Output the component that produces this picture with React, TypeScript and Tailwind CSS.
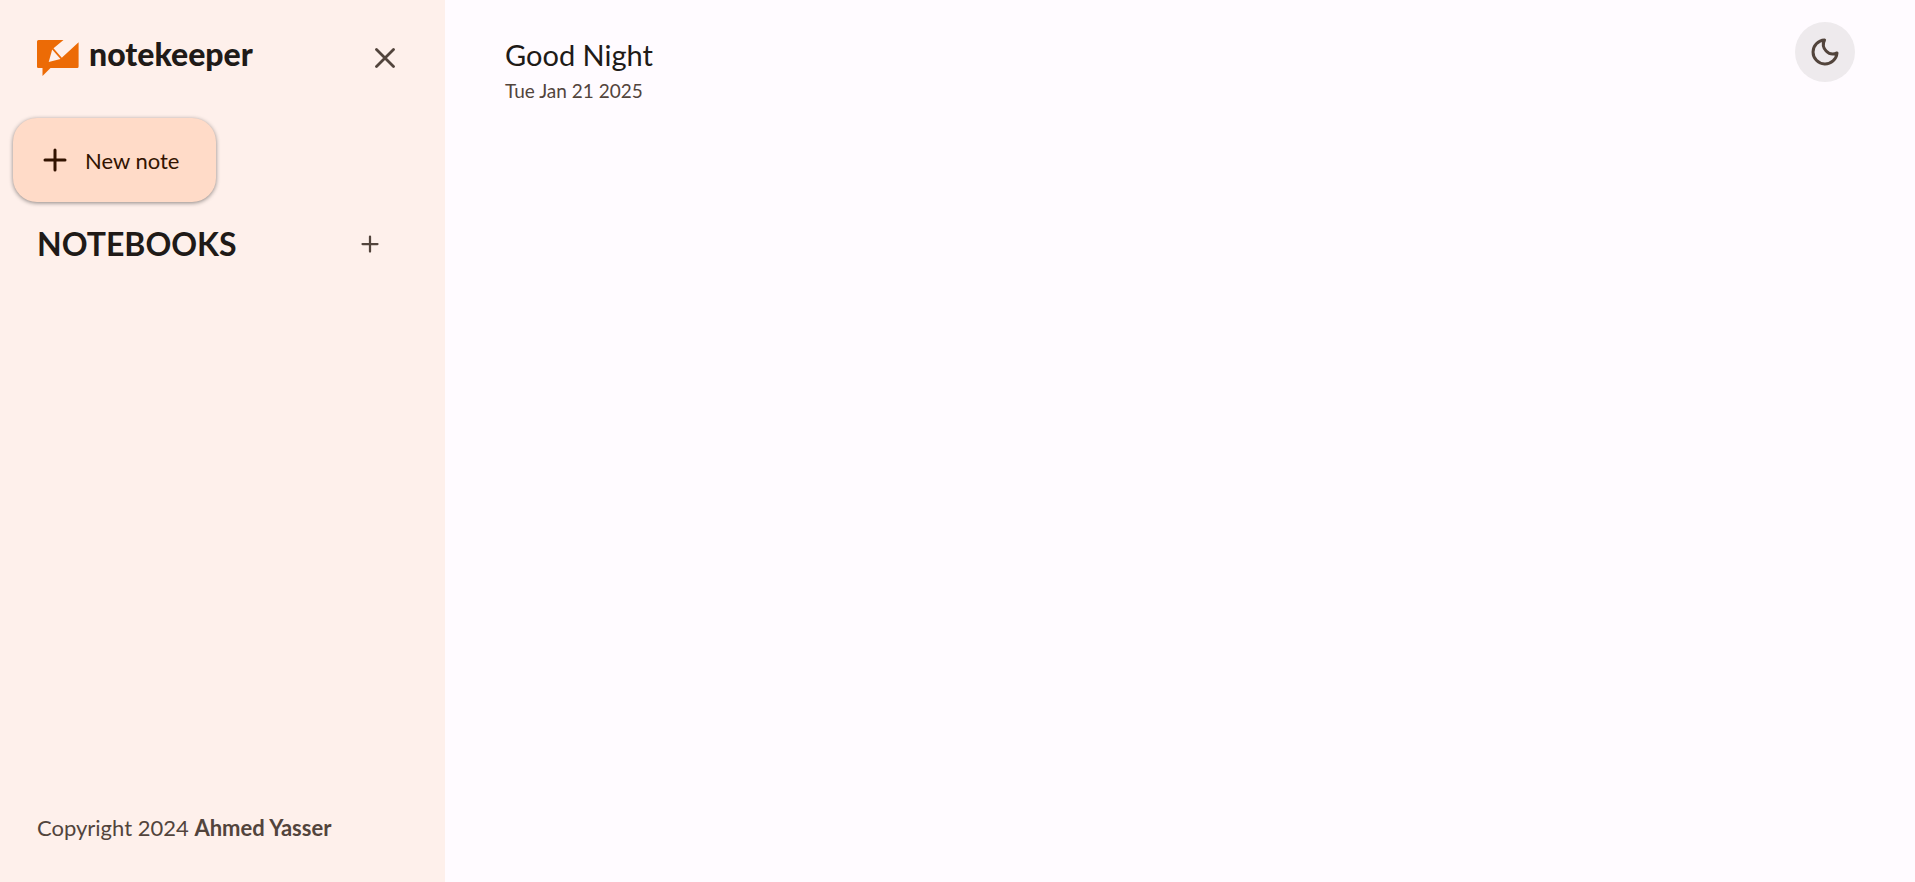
function Logo() {
  return (
    <a href="#" aria-label="notekeeper" className="flex items-start gap-2.5">
      <svg width="42" height="36" viewBox="0 0 42 36" aria-hidden="true">
        <path
          fill="#ec6b06"
          d="M1.500 0H26.500L16.500 8.200L24.800 17.800L41.600 2.300V26.500Q41.600 28 40.200 28H13.500L5.500 36V28H1.300Q0 28 0 26.700V1.500Q0 0 1.500 0Z"
        />
        <path fill="#fef0eb" d="M15.200 9.500L23.500 19L11.700 22Z" />
      </svg>
      <span className="-mt-1 font-[Lato,sans-serif] text-[32px] leading-9 font-black">notekeeper</span>
    </a>
  );
}

function Plus({ size, stroke }: { size: number; stroke: number }) {
  return (
    <svg width={size} height={size} viewBox="0 0 24 24" fill="none" stroke="currentColor" strokeWidth={stroke} strokeLinecap="round" aria-hidden="true">
      <path d="M12 2V22M2 12H22" />
    </svg>
  );
}

export default function App() {
  return (
    <div className="flex min-h-screen bg-[#fffbff] font-[Lato,sans-serif] text-[#201a17]">
      <aside className="flex w-[445px] shrink-0 flex-col bg-[#fef0eb] pt-7 pb-9">
        <div className="flex items-center justify-between pr-[30px] pl-[37px]">
          <Logo />
          <button type="button" aria-label="Close menu" className="flex size-[60px] items-center justify-center rounded-full text-[#52443c]">
            <svg width="20" height="20" viewBox="0 0 20 20" fill="none" stroke="currentColor" strokeWidth="2.800" strokeLinecap="round" aria-hidden="true">
              <path d="M1.500 1.500L18.500 18.500M18.500 1.500L1.500 18.500" />
            </svg>
          </button>
        </div>
        <button
          type="button"
          className="mt-[30px] ml-[13px] flex h-[84px] w-[203px] items-center gap-[18px] rounded-3xl bg-[#ffdbc8] pl-[30px] text-[22px] text-[#321300] shadow-[0_1px_4px_rgba(0,0,0,0.45)]"
        >
          <Plus size={24} stroke={3} />
          New note
        </button>
        <div className="mt-3 flex items-center justify-between pr-[45px] pl-[37px]">
          <h2 className="text-[32px] leading-[60px] font-bold">NOTEBOOKS</h2>
          <button type="button" aria-label="Create notebook" className="flex size-[60px] items-center justify-center rounded-full text-[#52443c]">
            <Plus size={18} stroke={3} />
          </button>
        </div>
        <p className="mt-auto pl-[37px] text-[22px] leading-9 text-[#52443c]">
          Copyright 2024 <strong className="font-bold">Ahmed Yasser</strong>
        </p>
      </aside>
      <main className="min-w-0 grow">
        <header className="flex items-start justify-between px-[60px] pt-[22px]">
          <div className="pt-[15px]">
            <h1 className="text-[29px] leading-9">Good Night</h1>
            <p className="text-[19px] leading-9 text-[#52443c]">Tue Jan 21 2025</p>
          </div>
          <button type="button" aria-label="Toggle theme" className="flex size-[60px] items-center justify-center rounded-full bg-[#eeeaed] text-[#52443c]">
            <svg width="36" height="36" viewBox="0 0 24 24" fill="none" stroke="currentColor" strokeWidth="2" strokeLinejoin="round" aria-hidden="true">
              <path d="M11.700 4A8 8 0 1 0 20 12.600A6.300 6.300 0 0 1 11.700 4Z" />
            </svg>
          </button>
        </header>
      </main>
    </div>
  );
}
